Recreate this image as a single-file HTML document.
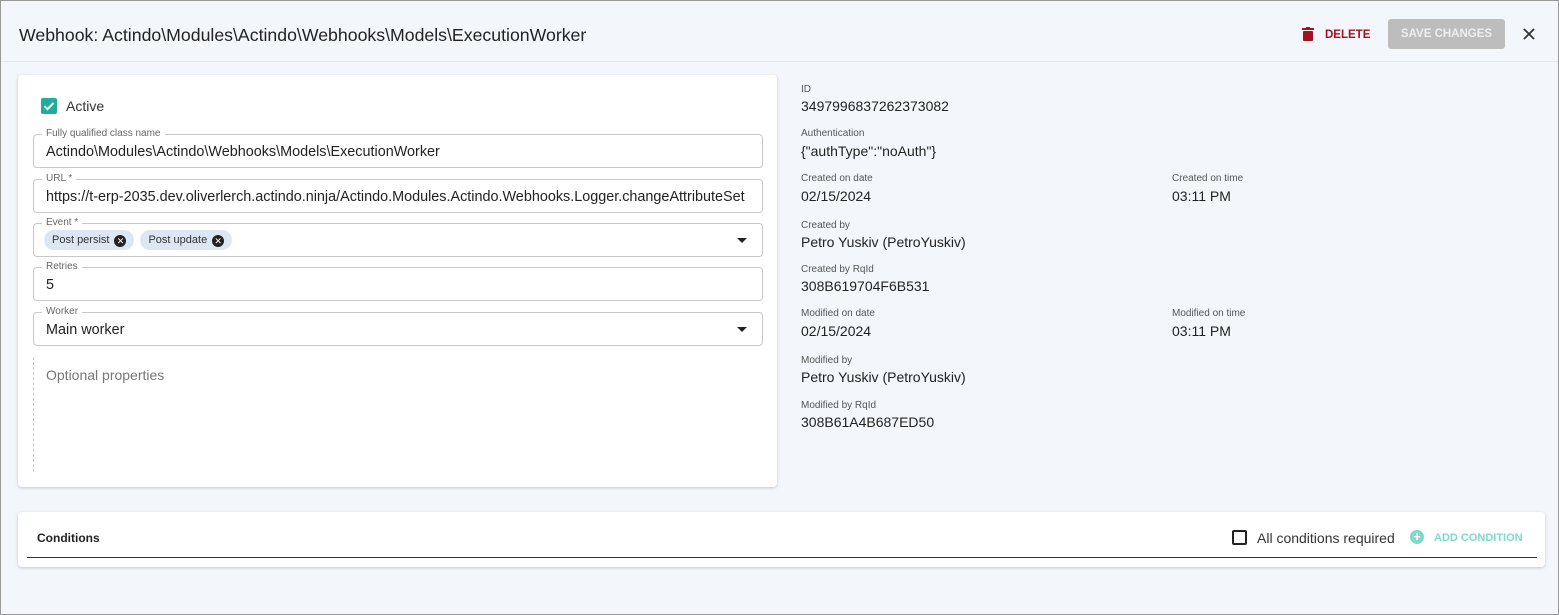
<!DOCTYPE html><html><head><style>
*{box-sizing:border-box;margin:0;padding:0}
body{width:1559px;height:615px;background:#f3f7fc;font-family:"Liberation Sans",sans-serif;color:#222;position:relative;overflow:hidden}
.frame{position:absolute;left:0;top:0;width:1559px;height:615px;border:1px solid #999;pointer-events:none}
.abs{position:absolute}
.hdr{left:0;top:0;width:1559px;height:62px;border-bottom:1px solid #e3e8ee}
.card{background:#fff;border-radius:4px;box-shadow:0 1px 3px rgba(0,0,0,.2)}
.f{position:absolute;left:33px;width:730px;height:34px;border:1px solid #c8c8c8;border-radius:4px}
.f .l{position:absolute;left:8px;top:-7px;font-size:10px;color:#666;background:#fff;padding:0 4px}
.f .v{position:absolute;left:12px;top:9px;font-size:14.4px;color:#222}
.f .dd{position:absolute;right:15px;top:14px;border-left:5px solid transparent;border-right:5px solid transparent;border-top:5px solid #222}
.chip{display:inline-block;height:20px;border-radius:10px;background:#dde7f3;font-size:11px;padding:4px 8px;color:#333;margin-right:6px;vertical-align:top}
.chip i{display:inline-block;width:12px;height:12px;border-radius:6px;background:#222;color:#fff;font-size:9px;font-style:normal;text-align:center;line-height:12px;margin-left:5px;vertical-align:-1px}
.k{position:absolute;font-size:10px;color:#555}
.vv{position:absolute;font-size:14px;color:#222}
</style></head><body>
<div class="abs hdr"></div>
<div class="abs" style="left:19px;top:25px;font-size:17.7px;color:#222">Webhook: Actindo\Modules\Actindo\Webhooks\Models\ExecutionWorker</div>
<svg class="abs" style="left:1302px;top:27px" width="12" height="14" viewBox="0 0 12 14"><rect x="0" y="1" width="12" height="2" fill="#a5121e"/><rect x="4" y="0" width="4" height="2" fill="#a5121e"/><rect x="1" y="4" width="10" height="10" rx="1" fill="#a5121e"/></svg>
<div class="abs" style="left:1325px;top:29px;font-size:11.5px;font-weight:bold;color:#a5121e">DELETE</div>
<div class="abs" style="left:1388px;top:19px;width:117px;height:30px;background:#bdbdbd;border-radius:3px;color:#eee;font-size:11.5px;font-weight:bold;text-align:center;line-height:30px">SAVE CHANGES</div>
<svg class="abs" style="left:1523px;top:28px" width="12" height="12"><path d="M1 1L11 11M11 1L1 11" stroke="#333" stroke-width="1.8"/></svg>

<div class="abs card" style="left:18px;top:75px;width:759px;height:412px"></div>
<div class="abs" style="left:41px;top:98px;width:16px;height:16px;background:#1fae9b;border-radius:2px"><svg width="16" height="16"><path d="M3.5 8.2l3 3 6-6.2" stroke="#fff" stroke-width="2" fill="none"/></svg></div>
<div class="abs" style="left:66px;top:98px;font-size:14px;color:#333">Active</div>
<div class="f" style="top:134px"><span class="l">Fully qualified class name</span><span class="v">Actindo\Modules\Actindo\Webhooks\Models\ExecutionWorker</span></div>
<div class="f" style="top:179px"><span class="l">URL *</span><span class="v">https://t-erp-2035.dev.oliverlerch.actindo.ninja/Actindo.Modules.Actindo.Webhooks.Logger.changeAttributeSet</span></div>
<div class="f" style="top:223px"><span class="l">Event *</span><div style="position:absolute;left:10px;top:6px"><span class="chip">Post persist<i>✕</i></span><span class="chip">Post update<i>✕</i></span></div><span class="dd"></span></div>
<div class="f" style="top:267px"><span class="l">Retries</span><span class="v">5</span></div>
<div class="f" style="top:312px"><span class="l">Worker</span><span class="v">Main worker</span><span class="dd"></span></div>
<div class="abs" style="left:33px;top:357px;height:115px;border-left:1px dashed #ccc"></div>
<div class="abs" style="left:46px;top:367px;font-size:14px;color:#777">Optional properties</div>

<div class="k" style="left:801px;top:84px">ID</div><div class="vv" style="left:801px;top:98px">3497996837262373082</div>
<div class="k" style="left:801px;top:128px">Authentication</div><div class="vv" style="left:801px;top:143px">{"authType":"noAuth"}</div>
<div class="k" style="left:801px;top:173px">Created on date</div><div class="vv" style="left:801px;top:188px">02/15/2024</div>
<div class="k" style="left:1172px;top:173px">Created on time</div><div class="vv" style="left:1172px;top:188px">03:11 PM</div>
<div class="k" style="left:801px;top:220px">Created by</div><div class="vv" style="left:801px;top:234px">Petro Yuskiv (PetroYuskiv)</div>
<div class="k" style="left:801px;top:264px">Created by RqId</div><div class="vv" style="left:801px;top:278px">308B619704F6B531</div>
<div class="k" style="left:801px;top:308px">Modified on date</div><div class="vv" style="left:801px;top:323px">02/15/2024</div>
<div class="k" style="left:1172px;top:308px">Modified on time</div><div class="vv" style="left:1172px;top:323px">03:11 PM</div>
<div class="k" style="left:801px;top:355px">Modified by</div><div class="vv" style="left:801px;top:369px">Petro Yuskiv (PetroYuskiv)</div>
<div class="k" style="left:801px;top:400px">Modified by RqId</div><div class="vv" style="left:801px;top:414px">308B61A4B687ED50</div>

<div class="abs card" style="left:18px;top:512px;width:1527px;height:55px"></div>
<div class="abs" style="left:37px;top:531px;font-size:12px;font-weight:bold;color:#222">Conditions</div>
<div class="abs" style="left:27px;top:557px;width:1510px;height:1px;background:#333"></div>
<div class="abs" style="left:1232px;top:530px;width:15px;height:15px;border:2px solid #222;border-radius:2px"></div>
<div class="abs" style="left:1257px;top:530px;font-size:14px;color:#333">All conditions required</div>
<div class="abs" style="left:1410px;top:530px;width:14px;height:14px;border-radius:7px;background:#7fd8cb;color:#fff;font-size:13px;font-weight:bold;line-height:14px;text-align:center">+</div>
<div class="abs" style="left:1434px;top:532px;font-size:11px;font-weight:bold;color:#7fd8cb">ADD CONDITION</div>
<div class="frame"></div>
</body></html>
